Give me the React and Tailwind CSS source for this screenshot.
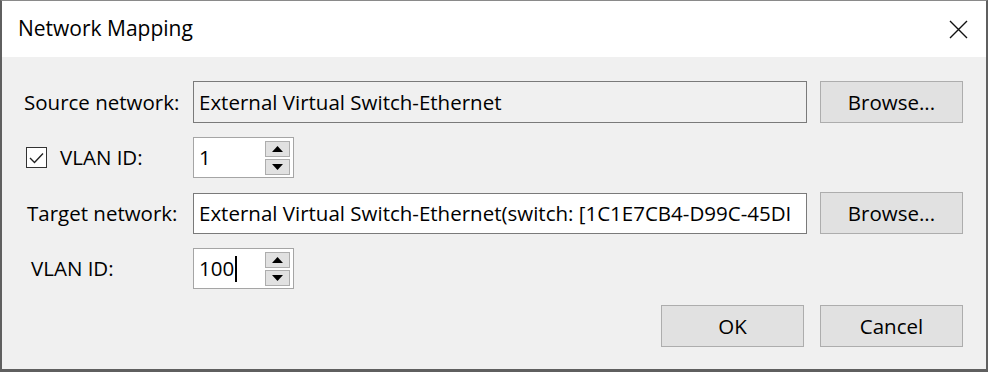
import React from 'react';

const font = { fontFamily: '"Open Sans", "Noto Sans", sans-serif' };

function Button({ children }) {
  return (
    <button className="h-[42px] w-[143px] shrink-0 border border-[#adadad] bg-[#e1e1e1] text-[20.5px] text-black">
      {children}
    </button>
  );
}

function Spinner({ value, caret }) {
  return (
    <div className="flex h-[41px] w-[101px] items-center border border-[#a5a5a5] bg-white pl-[5px] pr-[3px]">
      <div className="flex flex-1 items-center text-[20.5px] text-black">
        {value}
        {caret && <span className="ml-[1px] inline-block h-[26px] w-[2px] bg-black" />}
      </div>
      <div className="flex flex-col gap-[2px]">
        <div className="flex h-[16px] w-[25px] items-center justify-center border border-[#adadad] bg-[#e1e1e1]">
          <svg width="11" height="6" viewBox="0 0 11 6"><path d="M0 6 L5.5 0 L11 6 Z" fill="#000" /></svg>
        </div>
        <div className="flex h-[16px] w-[25px] items-center justify-center border border-[#adadad] bg-[#e1e1e1]">
          <svg width="11" height="6" viewBox="0 0 11 6"><path d="M0 0 L5.5 6 L11 0 Z" fill="#000" /></svg>
        </div>
      </div>
    </div>
  );
}

export default function App() {
  return (
    <div style={font} className="h-[372px] w-[988px] border-x-[2px] border-b-[3px] border-t border-x-[#5f5f5f] border-b-[#5f5f5f] border-t-[#8a8a8a] bg-[#f0f0f0]">
      {/* Title bar */}
      <div className="flex h-[56px] items-center justify-between bg-white pl-[16px] pr-[18px]">
        <span className="text-[21px] text-black">Network Mapping</span>
        <svg width="19" height="19" viewBox="0 0 19 19">
          <path d="M1 1 L18 18 M18 1 L1 18" stroke="#111" strokeWidth="1.4" />
        </svg>
      </div>

      {/* Body */}
      <div className="flex flex-col gap-[14px] pl-[22px] pr-[23px] pt-[24px] text-[20.5px] text-black">
        <div className="flex items-center">
          <span className="w-[169px] shrink-0 whitespace-nowrap">Source network:</span>
          <div className="mr-[13px] flex h-[42px] flex-1 items-center border border-[#7a7a7a] bg-[#f0f0f0] px-[5px]">
            External Virtual Switch-Ethernet
          </div>
          <Button>Browse...</Button>
        </div>

        <div className="flex items-center">
          <div className="flex w-[169px] shrink-0 items-center">
            <div className="ml-[2px] flex h-[21px] w-[21px] items-center justify-center border border-[#333] bg-white">
              <svg width="15" height="12" viewBox="0 0 15 12">
                <path d="M1 6 L5.5 10.5 L14 1.5" fill="none" stroke="#222" strokeWidth="1.4" />
              </svg>
            </div>
            <span className="ml-[13px]">VLAN ID:</span>
          </div>
          <Spinner value="1" />
        </div>

        <div className="flex items-center">
          <span className="w-[169px] shrink-0 whitespace-nowrap pl-[3px]">Target network:</span>
          <div className="mr-[13px] flex h-[41px] flex-1 items-center overflow-hidden whitespace-nowrap border border-[#7a7a7a] bg-white px-[5px]">
            External Virtual Switch-Ethernet(switch: [1C1E7CB4-D99C-45DI
          </div>
          <Button>Browse...</Button>
        </div>

        <div className="flex items-center">
          <span className="w-[169px] shrink-0 pl-[7px]">VLAN ID:</span>
          <Spinner value="100" caret />
        </div>

        <div className="mt-[2px] flex justify-end gap-[16px]">
          <Button>OK</Button>
          <Button>Cancel</Button>
        </div>
      </div>
    </div>
  );
}
